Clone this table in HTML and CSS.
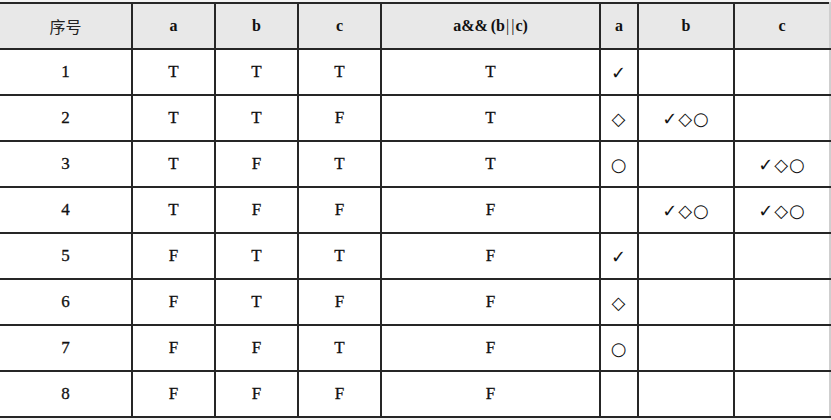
FILE: index.html
```html
<!DOCTYPE html>
<html lang="zh">
<head>
<meta charset="utf-8">
<link rel="stylesheet" href="styles.css">
</head>
<body>
<table class="truth">
  <colgroup>
    <col class="c-no"><col class="c-v"><col class="c-v"><col class="c-v"><col class="c-expr"><col class="c-a"><col class="c-w"><col class="c-w">
  </colgroup>
  <thead>
    <tr><th class="cjk">序号</th><th>a</th><th>b</th><th>c</th><th>a&amp;&amp;<span class="gap"></span>(b<span class="pipe">|</span><span class="pipe">|</span>c)</th><th>a</th><th>b</th><th>c</th></tr>
  </thead>
  <tbody>
    <tr><td>1</td><td>T</td><td>T</td><td>T</td><td>T</td><td class="sym">✓</td><td class="sym"></td><td class="sym"></td></tr>
    <tr><td>2</td><td>T</td><td>T</td><td>F</td><td>T</td><td class="sym">◇</td><td class="sym">✓◇○</td><td class="sym"></td></tr>
    <tr><td>3</td><td>T</td><td>F</td><td>T</td><td>T</td><td class="sym">○</td><td class="sym"></td><td class="sym">✓◇○</td></tr>
    <tr><td>4</td><td>T</td><td>F</td><td>F</td><td>F</td><td class="sym"></td><td class="sym">✓◇○</td><td class="sym">✓◇○</td></tr>
    <tr><td>5</td><td>F</td><td>T</td><td>T</td><td>F</td><td class="sym">✓</td><td class="sym"></td><td class="sym"></td></tr>
    <tr><td>6</td><td>F</td><td>T</td><td>F</td><td>F</td><td class="sym">◇</td><td class="sym"></td><td class="sym"></td></tr>
    <tr><td>7</td><td>F</td><td>F</td><td>T</td><td>F</td><td class="sym">○</td><td class="sym"></td><td class="sym"></td></tr>
    <tr><td>8</td><td>F</td><td>F</td><td>F</td><td>F</td><td class="sym"></td><td class="sym"></td><td class="sym"></td></tr>
  </tbody>
</table>
</body>
</html>
```

FILE: styles.css
```css
html, body {
  margin: 0;
  padding: 0;
  background: #f3f3f3;
}
body {
  padding-top: 2px;
  font-family: "Liberation Serif", "Times New Roman", serif;
  color: #111;
}
.truth {
  border-collapse: collapse;
  table-layout: fixed;
  width: 831px;
  background: #fff;
}
.c-no { width: 132px; }
.c-v { width: 83px; }
.c-expr { width: 219px; }
.c-a { width: 38px; }
.c-w { width: 96px; }
.truth th,
.truth td {
  height: 44px;
  padding: 0;
  border: 2px solid #262626;
  text-align: center;
  vertical-align: middle;
  font-size: 17px;
  font-weight: normal;
  -webkit-text-stroke: 0.3px #111;
}
.truth th {
  background: #e8e8e8;
  font-weight: bold;
  font-size: 16px;
  -webkit-text-stroke: 0;
}
.truth th:first-child,
.truth td:first-child {
  border-left: none;
}
.truth th:last-child,
.truth td:last-child {
  border-right: 2px solid #cfcfcf;
}
.truth .cjk {
  font-family: "Noto Sans CJK SC", sans-serif;
  font-weight: normal;
  font-size: 16px;
  color: #222;
}
.gap {
  display: inline-block;
  width: 3px;
}
.pipe {
  display: inline-block;
  padding: 0 1px;
  font-weight: normal;
}
.truth td.sym {
  font-family: "DejaVu Sans", sans-serif;
  font-weight: normal;
  font-size: 18px;
  letter-spacing: 1px;
  -webkit-text-stroke: 0;
}
```
